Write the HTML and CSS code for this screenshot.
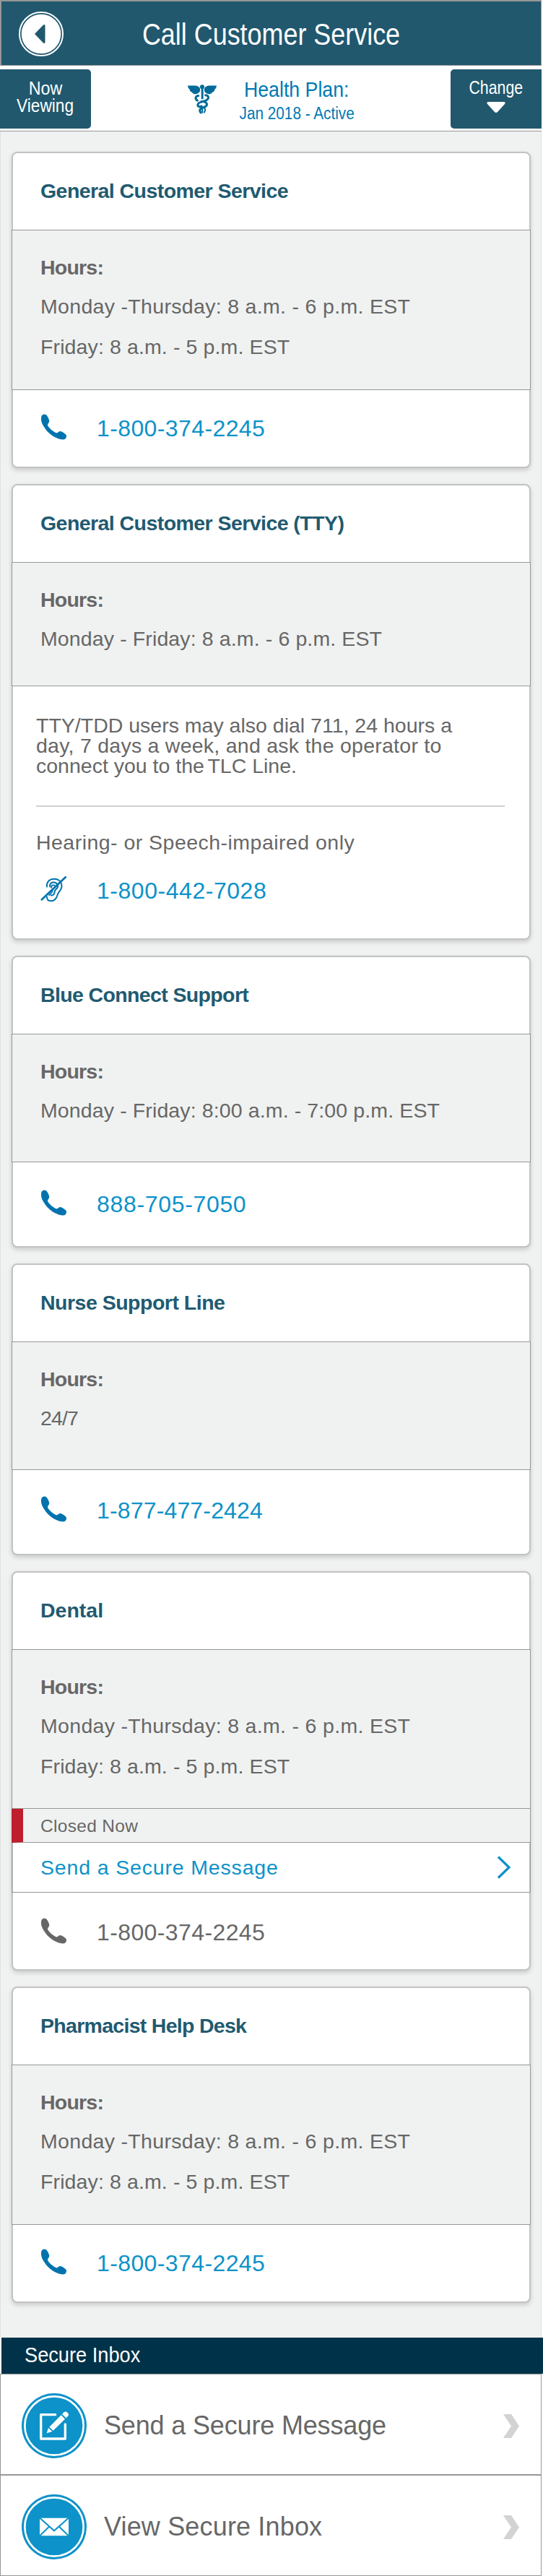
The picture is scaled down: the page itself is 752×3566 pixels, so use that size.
FILE: index.html
```html
<!DOCTYPE html>
<html lang="en">
<head>
<meta charset="utf-8">
<title>Call Customer Service</title>
<link rel="stylesheet" href="styles.css">
</head>
<body>
<svg class="defs" width="0" height="0" aria-hidden="true">
  <symbol id="phone" viewBox="0 0 110 110"><path d="M3 9C6 2 15-1 22 3C30 11 35 22 36 30C36 38 28 42 29 48C35 60 50 73 66 81C73 80 75 73 83 73C93 75 103 83 108 90C110 98 105 106 99 108C80 110 50 98 28 74C8 50-3 30 3 9Z"/></symbol>
  <symbol id="chevron" viewBox="0 0 22 33"><path d="M0 0H11L22 16.5L11 33H0L11 16.5Z"/></symbol>
</svg>
<div class="page">
  <header class="header">
    <a class="back"><svg width="62" height="62" viewBox="0 0 62 62"><circle cx="31" cy="31" r="30" fill="none" stroke="#fff" stroke-width="2"/><circle cx="31" cy="31" r="27.3" fill="#fff"/><path d="M22 31L34 18.5Q36.5 17 36.5 20V42Q36.5 45 34 43.5Z" fill="#21586e"/></svg></a>
    <h1 class="header__title">Call Customer Service</h1>
  </header>

  <section class="plan">
    <div class="plan__tab plan__tab--left"><span class="now">Now</span><span class="viewing">Viewing</span></div>
    <div class="plan__center">
      <svg class="plan__icon" width="40" height="41" viewBox="0 0 120 122" fill="#006b99">
        <path d="M0 4H30Q46 5 51 16V27Q43 40 28 39Q20 38 17 31Q8 29 8 20Q1 16 0 4Z"/>
        <path d="M120 4H90Q74 5 69 16V27Q77 40 92 39Q100 38 103 31Q112 29 112 20Q119 16 120 4Z"/>
        <circle cx="60" cy="9" r="9"/><path d="M56 14H65V58L60 62L56 58Z"/>
        <g fill="none" stroke="#006b99" stroke-width="9" stroke-linecap="round"><path d="M44 46C31 47 30 61 40 66"/><path d="M74 44C88 45 90 58 77 65C64 72 45 71 42 82C40 91 51 95 57 89" /><path d="M57 70C74 70 83 77 78 87C73 95 55 95 51 104C49 110 52 114 54 116"/><path d="M60 92L61 116M69 97C75 103 72 110 69 115" stroke-width="6"/></g>
      </svg>
      <div class="plan__text"><span class="plan__name">Health Plan:</span><span class="plan__status">Jan 2018 - Active</span></div>
    </div>
    <div class="plan__tab plan__tab--right"><span class="change">Change</span><svg width="26" height="15" viewBox="0 0 26 15"><path d="M3 0H23Q27 0 25 3L15 14Q13 16 11 14L1 3Q-1 0 3 0Z" fill="#fff"/></svg></div>
  </section>

  <main class="cards">
    <article class="card">
      <h2 class="card__title">General Customer Service</h2>
      <div class="hours hours--two"><b class="hours__label">Hours:</b><span class="wide">Monday -Thursday: 8 a.m. - 6 p.m. EST</span><span>Friday: 8 a.m. - 5 p.m. EST</span></div>
      <a class="call"><svg class="call__icon"><use href="#phone"/></svg><span class="call__number">1-800-374-2245</span></a>
    </article>

    <article class="card card--tty">
      <h2 class="card__title">General Customer Service (TTY)</h2>
      <div class="hours hours--short"><b class="hours__label">Hours:</b><span>Monday - Friday: 8 a.m. - 6 p.m. EST</span></div>
      <div class="note">
        <p class="note__text">TTY/TDD users may also dial 711, 24 hours a<br><span class="note__mid">day, 7 days a week, and ask the operator to</span><br>connect you to the<span class="thin"> </span>TLC Line.</p>
        <p class="note__only">Hearing- or Speech-impaired only</p>
      </div>
      <a class="call"><svg class="call__icon ear" viewBox="50 69 107 107"><g fill="none" stroke="#0073ae" stroke-width="6" stroke-linecap="round"><path d="M54 165L152 73" stroke-width="8"/><path d="M75 112C74 91 86 80 105 80C126 80 137 94 136 112C135 127 123 132 119 145C114 163 106 171 92 171C81 171 75 164 75 154"/><path d="M88 112C85 99 95 93 104 94C118 95 124 107 118 117C113 124 106 126 107 134C106 144 99 149 92 147"/><path d="M94 116C91 104 108 101 109 111C110 119 97 119 98 129C99 137 90 139 84 147" stroke-width="5"/></g></svg><span class="call__number call__number--tty">1-800-442-7028</span></a>
    </article>

    <article class="card card--blue">
      <h2 class="card__title">Blue Connect Support</h2>
      <div class="hours"><b class="hours__label">Hours:</b><span>Monday - Friday: 8:00 a.m. - 7:00 p.m. EST</span></div>
      <a class="call"><svg class="call__icon"><use href="#phone"/></svg><span class="call__number call__number--blue">888-705-7050</span></a>
    </article>

    <article class="card card--nurse">
      <h2 class="card__title">Nurse Support Line</h2>
      <div class="hours"><b class="hours__label">Hours:</b><span class="allday">24/7</span></div>
      <a class="call"><svg class="call__icon"><use href="#phone"/></svg><span class="call__number call__number--nurse">1-877-477-2424</span></a>
    </article>

    <article class="card card--dental">
      <h2 class="card__title">Dental</h2>
      <div class="hours"><b class="hours__label">Hours:</b><span class="wide">Monday -Thursday: 8 a.m. - 6 p.m. EST</span><span>Friday: 8 a.m. - 5 p.m. EST</span></div>
      <div class="closed">Closed Now</div>
      <a class="message">Send a Secure Message<svg width="20" height="32" viewBox="0 0 20 32"><path d="M2 1.5L17 16L2 30.5" fill="none" stroke="#0d92c9" stroke-width="3.2"/></svg></a>
      <a class="call call--off"><svg class="call__icon"><use href="#phone"/></svg><span class="call__number">1-800-374-2245</span></a>
    </article>

    <article class="card card--pharm">
      <h2 class="card__title">Pharmacist Help Desk</h2>
      <div class="hours hours--two"><b class="hours__label">Hours:</b><span class="wide">Monday -Thursday: 8 a.m. - 6 p.m. EST</span><span>Friday: 8 a.m. - 5 p.m. EST</span></div>
      <a class="call"><svg class="call__icon"><use href="#phone"/></svg><span class="call__number">1-800-374-2245</span></a>
    </article>
  </main>

  <section class="inbox">
    <h2 class="inbox__bar"><span>Secure Inbox</span></h2>
    <a class="row">
      <svg class="row__icon" viewBox="0 0 270 270"><circle cx="135" cy="135" r="135" fill="#0d92c9"/><circle cx="135" cy="135" r="122" fill="none" stroke="#fff" stroke-width="8"/><path d="M140 89H80V189H181V129" fill="none" stroke="#fff" stroke-width="10" stroke-linecap="round" stroke-linejoin="round"/><path d="M115 140L164 91L180 107L131 155ZM111 144L127 159L104 166ZM168 87L174 80Q182 73 190 80Q199 88 192 95L185 103Z" fill="#fff"/></svg>
      <span class="row__label">Send a Secure Message</span>
      <svg class="row__chevron"><use href="#chevron"/></svg>
    </a>
    <a class="row row--last">
      <svg class="row__icon" viewBox="0 0 270 270"><circle cx="135" cy="135" r="135" fill="#0d92c9"/><circle cx="135" cy="135" r="122" fill="none" stroke="#fff" stroke-width="8"/><path d="M75 98H195V172H75Z" fill="#fff"/><path d="M74 97L135 151L196 97M74 173L117 131M196 173L153 131" fill="none" stroke="#0d92c9" stroke-width="6"/></svg>
      <span class="row__label row__label--view">View Secure Inbox</span>
      <svg class="row__chevron"><use href="#chevron"/></svg>
    </a>
  </section>
</div>
</body>
</html>
```

FILE: styles.css
```css
* { box-sizing: border-box; }
body { margin: 0; background: #fff; font-family: "Liberation Sans", Arial, sans-serif; color: #676767; }
h1, h2, p { margin: 0; font-weight: 400; }
svg { display: block; flex: none; }
.defs { position: absolute; }
.page { width: 752px; height: 3566px; display: flex; flex-direction: column; }

.header { width: 750px; height: 91px; display: grid; grid-template-columns: 100px 1fr 100px; align-items: center; background: #21586e; border: 2px solid #979797; border-right-width: 1px; border-bottom-width: 1px; }
.back { padding: 2px 0 0 24px; }
.header__title { font-size: 42px; line-height: 50px; padding-top: 4px; color: #fff; text-align: center; white-space: nowrap; transform: scaleX(.855); }

.plan { width: 750px; height: 91px; padding: 5px 0 3px; display: flex; border: solid #979797; border-width: 0 0 1px; background: #fff; }
.plan__tab { width: 126px; height: 82px; display: flex; flex-direction: column; align-items: center; background: #21586e; color: #fff; font-size: 25px; line-height: 24px; }
.plan__tab--left { padding-top: 14px; border-radius: 0 5px 5px 0; }
.plan__tab--right { padding-top: 13px; border-radius: 5px 0 0 5px; }
.plan__tab--right svg { margin-top: 8px; }
.now { transform: scaleX(.93); }
.viewing { transform: scaleX(.907); }
.change { transform: scaleX(.853); }
.plan__center { flex: 1; display: flex; padding-left: 134px; }
.plan__icon { margin-top: 21px; }
.plan__text { width: 222px; padding-top: 11px; display: flex; flex-direction: column; align-items: center; color: #0079b3; white-space: nowrap; }
.plan__name { font-size: 30px; line-height: 34px; transform: scaleX(.89); }
.plan__status { font-size: 23.5px; line-height: 32px; transform: scaleX(.883); }

.cards { width: 750px; height: 3054px; padding: 28px 14px 0 15px; display: flex; flex-direction: column; gap: 22px; background: #f0f2f1; border: solid #e0e2e1; border-width: 0 1px; }
.card { height: 438px; flex: none; background: #fff; border: 2px solid #c2c2c2; border-radius: 8px; box-shadow: 0 3px 6px rgba(0,0,0,.16); font-size: 28.5px; }
.card__title { height: 106px; padding: 25px 38px 0; font-size: 28.5px; line-height: 54px; font-weight: 700; letter-spacing: -.56px; color: #215a70; }
.hours { height: 178px; margin: 0 -2px; padding: 25px 39px 0; display: flex; flex-direction: column; line-height: 56px; background: #f0f2f1; border: 1px solid #979797; letter-spacing: .12px; }
.hours--two { height: 222px; }
.hours--short { height: 172px; }
.hours__label { line-height: 52px; letter-spacing: -.79px; }
.wide { letter-spacing: .32px; }
.allday { letter-spacing: -.87px; }
.call { display: flex; gap: 41px; padding: 33px 38px 0; color: #0d92c9; font-size: 32px; line-height: 36px; }
.call__icon { width: 37px; height: 36px; fill: #0073ae; }
.call__number { padding-top: 2px; letter-spacing: .39px; }
.call__number--tty { letter-spacing: .54px; }
.call__number--blue { letter-spacing: .67px; }
.call__number--nurse { letter-spacing: .16px; }
.call--off { color: #676767; }
.call--off .call__icon { fill: #676767; }

.card--tty { height: 631px; }
.card--tty .call { padding-top: 33px; }
.note { padding: 40px 32px 0; line-height: 28px; }
.note__text { height: 127px; border-bottom: 2px solid #d0d0d0; margin-right: 2px; white-space: nowrap; }
.note__mid { letter-spacing: .25px; }
.thin { font-size: 16px; }
.note__only { padding-top: 35px; letter-spacing: .47px; }
.card--blue, .card--nurse { height: 404px; }
.card--blue .card__title { letter-spacing: -.63px; }
.card--blue .call { padding-top: 38px; }
.card--nurse .card__title { letter-spacing: -.5px; }
.card--nurse .call { padding-top: 36px; }
.card--dental { height: 553px; }
.card--dental .card__title { letter-spacing: 0; }
.card--dental .hours { height: 221px; }
.card--dental .call { padding-top: 35px; }
.card--pharm .card__title { letter-spacing: -.71px; }
.closed { height: 47px; margin: 0 -2px; padding-left: 24px; border: solid #979797; border-width: 0 1px 1px 0; border-left: 16px solid #be1e2d; background: #f0f2f1; font-size: 24.5px; line-height: 48px; letter-spacing: .32px; }
.message { height: 69px; margin: 0 -2px; padding: 0 26px 0 39px; display: flex; align-items: center; justify-content: space-between; border: solid #979797; border-width: 0 1px 1px; color: #0d92c9; letter-spacing: .84px; }

.inbox__bar { height: 50px; margin-left: 2px; padding-left: 32px; background: #003349; color: #fff; font-size: 29px; line-height: 48px; }
.inbox__bar span { display: inline-block; transform: scaleX(.938); transform-origin: left; }
.row { width: 750px; height: 140px; padding: 4px 30px 0 29px; display: flex; align-items: center; border: solid #979797; border-width: 1px 1px 1px; font-size: 36px; }
.row--last { border-top-width: 1px; }
.row__icon { width: 90px; height: 90px; }
.row__label { flex: 1; padding-left: 24px; letter-spacing: -.16px; }
.row__label--view { letter-spacing: .16px; }
.row__chevron { width: 22px; height: 33px; fill: #d1d3d4; }
```
